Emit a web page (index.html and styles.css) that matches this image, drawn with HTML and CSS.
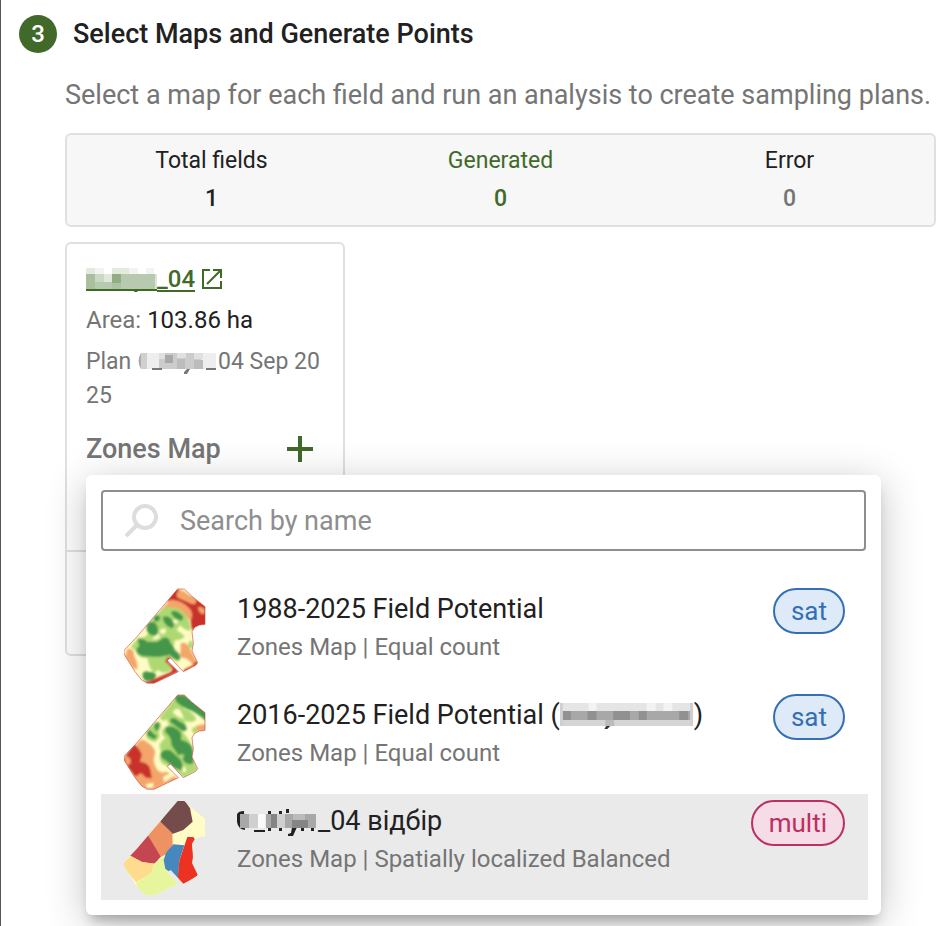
FILE: index.html
```html
<!DOCTYPE html>
<html lang="en">
<head>
<meta charset="utf-8">
<title>Select Maps and Generate Points</title>
<link rel="stylesheet" href="styles.css">
</head>
<body>
<main class="step">
  <header class="step-head">
    <span class="step-number">3</span>
    <h1 class="step-title">Select Maps and Generate Points</h1>
  </header>
  <div class="step-body">
    <p class="intro">Select a map for each field and run an analysis to create sampling plans.</p>
    <dl class="summary">
      <div class="stat"><dt>Total fields</dt><dd>1</dd></div>
      <div class="stat stat-ok"><dt>Generated</dt><dd>0</dd></div>
      <div class="stat stat-error"><dt>Error</dt><dd>0</dd></div>
    </dl>
    <div class="fields">
      <article class="card">
        <div class="card-main">
          <a class="field-link" href="#field"><span class="field-name"><svg class="mosaic mosaic-link" viewBox="0 0 71 24" aria-hidden="true">
            <path fill="#e3ebdf" d="M0 0h9v6H0zM26 0h17v6H26z"/><path fill="#f1f5ef" d="M9 0h9v6H9zM43 0h9v6h-9zM60 0h8v6h-8z"/>
            <path fill="#a9bf9d" d="M0 6h9v15H0z"/><path fill="#cbd8c4" d="M9 6h9v8H9z"/><path fill="#b7c9ae" d="M9 14h17v7H9zM35 6h34v15H35z"/><path fill="#e0e8dc" d="M18 6h8v8h-8z"/><path fill="#92ad82" d="M26 6h9v9h-9z"/><path fill="#aec3a3" d="M26 15h9v6h-9z"/><path fill="#dce6d7" d="M69 6h2v15h-2z"/><path fill="#3f6b27" d="M0 21h71v2H0zM49 22h4l-2 2h-3z"/>
          </svg>_04</span><svg class="icon-open" viewBox="0 0 22 22" aria-hidden="true"><path d="M9 2H2V20H20V13M12 2H20V10M6 16L20 2"/></svg></a>
          <p class="area">Area: <strong>103.86 ha</strong></p>
          <p class="plan">Plan <svg class="mosaic mosaic-plan" viewBox="0 0 81 22" aria-hidden="true">
            <path fill="#aaa" d="M4 1Q-1 9 4 17z"/><path fill="#d0d0d0" d="M4 1h6v16H4z"/><path fill="#eee" d="M10 1h12v16H10zM64 1h15v16H64z"/><path fill="#ccc" d="M22 1h42v16H22z"/><path fill="#e0e0e0" d="M22 1h6v6h-6zM40 1h9v5h-9zM57 1h9v6h-9z"/><path fill="#a8a8a8" d="M28 3h8v8h-8z"/><path fill="#bcbcbc" d="M40 7h8v10h-8zM57 8h9v9h-9z"/><path fill="#777" d="M15 16h10v2H15zM69 16h10v2H69zM50 17h3l-3 5h-3v-2z"/>
          </svg>04 Sep 20<br>25</p>
          <div class="zones">
            <h2>Zones Map</h2>
            <button class="add" type="button" aria-label="Add map"><svg viewBox="0 0 26 26" aria-hidden="true"><path d="M13 0V26M0 13H26"/></svg></button>
          </div>
        </div>
        <div class="card-foot"></div>
      </article>
      <section class="picker">
        <label class="search">
          <svg viewBox="0 0 34 34" aria-hidden="true"><circle cx="21" cy="13" r="11"/><path d="M13 21L2 32"/></svg>
          <input type="search" placeholder="Search by name" aria-label="Search by name">
        </label>
        <ul class="maps">
          <li><button class="map" type="button">
            <svg class="thumb" viewBox="42 39 246 288" aria-hidden="true">
              <defs>
                <path id="shape" d="M203 42H223L245 63L285 95V148L268 150L254 157L246 170L250 205L246 228L263 263L257 271L220 290L182 249L171 256L205 290L132 325H112L95 315L75 290L42 237V226L80 186Z"/>
                <clipPath id="field"><use href="#shape"/></clipPath>
                <filter id="soft"><feGaussianBlur stdDeviation="3"/></filter>
              </defs>
              <g clip-path="url(#field)"><path fill="#fffbc4" d="M40 40h250v290H40z"/><g filter="url(#soft)">
                <path fill="#c9302a" d="M196 38L290 90V155L245 165L240 125L170 75Z"/>
                <path fill="#f4a66b" d="M205 48Q220 42 235 60L257 76Q262 88 248 88L205 69Q195 60 205 48M264 97Q275 92 288 108L280 118Q266 115 264 97M182 74Q215 75 238 100Q252 115 242 138Q215 110 175 100L160 108L148 122L152 105ZM52 222Q72 218 72 242Q84 262 82 285L64 275L45 245ZM212 205Q228 198 238 218L262 262L246 268Q238 250 218 248Q205 245 212 230Z"/>
                <path fill="#aed972" d="M148 110Q165 90 185 98Q208 96 224 118Q245 140 240 168Q222 165 210 150L200 165L224 183Q220 195 195 196L190 215L210 240L205 262L180 246L170 262L185 285Q160 300 145 285L132 294L120 278L112 250Q80 248 78 228L62 215L85 188Q105 190 114 176L110 150ZM238 198Q250 195 250 215Q238 228 234 212Z"/>
                <path fill="#fffbc4" d="M124 200Q142 180 132 196L150 188L144 170L132 184ZM148 168Q158 156 168 164Q170 174 156 178ZM188 135L202 134L204 146L190 144Z"/>
                <path fill="#45964b" d="M132 124Q148 116 151 130Q147 144 132 138ZM110 150Q122 132 138 146Q150 166 140 181Q118 186 110 165ZM158 126Q176 118 190 140Q196 158 184 160Q160 150 158 126M183 110Q200 102 219 124Q222 142 204 134Q185 125 183 110M83 192Q100 188 112 200L142 200L160 188Q180 186 180 202Q192 214 194 226Q214 240 211 252Q200 262 180 240L145 246Q116 244 98 244Q75 236 80 220Q92 215 85 204ZM98 295Q108 285 118 292Q132 288 139 302L130 316L108 318Q96 310 98 295"/>
                <path fill="#c9302a" d="M165 258L174 245L184 250L175 262L208 288L132 328H85L120 318L180 292L188 284ZM222 284L246 272L258 258L267 266L222 294Z"/>
              </g></g><use href="#shape" class="edge"/>
            </svg>
            <span class="map-text"><span class="map-name">1988-2025 Field Potential</span><span class="map-kind">Zones Map | Equal count</span></span>
            <span class="tag tag-sat">sat</span>
          </button></li>
          <li><button class="map" type="button">
            <svg class="thumb" viewBox="42 39 246 288" aria-hidden="true">
              <g clip-path="url(#field)"><path fill="#fffbc4" d="M40 40h250v290H40z"/><g filter="url(#soft)" transform="translate(0 12)">
                <path fill="#f4a66b" d="M80 175Q92 160 104 166L120 178Q142 196 132 216Q128 232 140 252Q152 268 168 260Q190 268 205 282L130 317H95L70 280L85 268ZM178 56Q194 50 200 68L188 72ZM258 122L290 116V140H255Z"/>
                <path fill="#c9302a" d="M166 78Q174 64 180 74L198 86L190 96L160 90ZM72 176L84 188L96 208L90 230Q114 232 120 250L126 280L108 278L93 264L76 276L38 225Z"/>
                <path fill="#f4a66b" d="M42 216Q64 210 62 235L50 242Z"/>
                <path fill="#aed972" d="M198 35L224 72Q240 74 256 96Q262 110 244 110Q224 112 217 100Q230 114 228 132L218 140L240 170L252 230L264 254L222 278L192 252L158 236Q142 220 154 206L148 180Q158 162 168 160Q152 150 157 134L178 118Q160 98 180 96L160 108L148 98ZM114 132Q128 116 148 110Q160 124 146 140Q154 158 136 170Q116 168 108 155ZM248 128Q258 122 264 135L255 146L246 140Z"/>
                <path fill="#fffbc4" d="M188 82Q202 60 214 82L222 102L202 94ZM220 186Q236 186 234 198L222 200ZM217 242Q230 246 228 260L218 262ZM190 126L202 138L190 138Z"/>
                <path fill="#45964b" d="M196 30H224L290 80V110Q258 80 232 72Q205 60 196 46ZM181 102Q194 94 206 108Q228 116 231 132Q226 142 214 136L180 110ZM132 120Q140 106 149 116Q148 135 136 138ZM112 140Q120 130 128 144L140 152Q138 166 126 160L110 150ZM166 128Q190 116 212 142Q216 158 212 164Q238 170 245 184Q252 200 250 235Q236 242 222 230L218 218L224 212Q214 202 206 212L184 180Q186 158 166 142ZM152 204Q166 188 184 198L212 224Q222 242 214 256L192 248L166 226Q150 220 152 204"/>
                <path fill="#fffbc4" d="M160 275L188 262L196 270L162 292ZM108 298L130 294V306L112 310Z"/>
              </g></g><use href="#shape" class="edge"/>
            </svg>
            <span class="map-text"><span class="map-name">2016-2025 Field Potential (<svg class="mosaic mosaic-map" viewBox="0 0 136 28" preserveAspectRatio="none" aria-hidden="true">
              <path fill="#cfcfcf" d="M0 1h3v23H0zM132 1h3v23h-3z"/><path fill="#e5e5e5" d="M3 1h129v8H3z"/><path fill="#f3f3f3" d="M29 1h8v8h-8zM88 1h9v8h-9zM105 1h9v8h-9z"/><path fill="#a8a8a8" d="M3 9h129v9H3z"/><path fill="#919191" d="M3 9h8v9H3zM28 9h9v9h-9zM54 9h17v9H54zM80 9h8v9h-8zM121 9h9v9h-9z"/><path fill="#d5d5d5" d="M3 18h129v6H3z"/><path fill="#bbb" d="M46 18h9v6h-9z"/><path fill="#333" d="M47 24h4l-3 3h-3z"/>
            </svg>)</span><span class="map-kind">Zones Map | Equal count</span></span>
            <span class="tag tag-sat">sat</span>
          </button></li>
          <li><button class="map map-active" type="button">
            <svg class="thumb" viewBox="42 30 246 288" aria-hidden="true">
              <g transform="translate(0 -9)" clip-path="url(#field)"><g transform="translate(0 9)">
                <path fill="#fffdc5" d="M40 30h250v290H40z"/>
                <path fill="#734c4b" d="M200 28H222L240 55L248 95L220 120L187 132L150 95Z"/>
                <path fill="#ee9163" d="M150 94L187 130L188 165L170 192L148 203L113 134Z"/>
                <path fill="#c34650" d="M113 134L152 200L134 221L96 216L60 197Z"/>
                <path fill="#fddc8e" d="M62 197L96 216L132 221L124 250L78 277L35 225Z"/>
                <path fill="#e7f69d" d="M78 279L124 250L132 221L160 200L170 235L210 280L132 325H95Z"/>
                <path fill="#4688bd" d="M190 163L223 166L208 212L204 265L166 236L161 210L168 188Z"/>
                <path fill="#eb3223" d="M232 141H250L256 150L247 162L249 205L265 255L220 284L203 264L208 212Z"/>
              </g></g>
            </svg>
            <span class="map-text"><span class="map-name"><svg class="mosaic mosaic-active" viewBox="0 0 81 28" aria-hidden="true">
              <path fill="#222" d="M7 3Q-3 3 0 14Q1 21 8 22zM17 22h11v2H17zM31 3h3v3h-3zM42 3h3v3h-3zM49 1h3v4h-3zM31 19h3v4h-3zM42 19h3v4h-3zM55 19h5l-4 9h-5v-2l3-1zM64 19h3v4h-3zM74 19h3v4h-3z"/><path fill="#a8a8a8" d="M3 6h9v14H3zM29 6h12v14H29zM47 6h32v14H47z"/><path fill="#cfcfcf" d="M12 6h9v14h-9zM40 6h8v14h-8z"/><path fill="#fafafa" d="M21 6h7v14h-7z"/><path fill="#858585" d="M34 6h6v14h-6zM55 12h16v8H55z"/><path fill="#bbb" d="M56 6h12v6H56z"/>
            </svg>_04 відбір</span><span class="map-kind">Zones Map | Spatially localized Balanced</span></span>
            <span class="tag tag-multi">multi</span>
          </button></li>
        </ul>
      </section>
    </div>
  </div>
</main>
</body>
</html>
```
FILE: styles.css
```css
* { box-sizing: border-box; }
body {
  margin: 0;
  background: #fff;
  color: #212121;
  font-family: Roboto, "Liberation Sans", sans-serif;
  font-size: 24px;
}
h1, h2, p, dl, dd, ul { margin: 0; padding: 0; }
ul { list-style: none; }
button { font: inherit; color: inherit; border: 0; background: none; padding: 0; cursor: pointer; }

.step { min-height: 100vh; border-left: 1px solid #555; padding: 15px 10px 0 18px; }
.step-head { display: flex; align-items: center; gap: 16px; }
.step-number {
  display: grid; place-items: center;
  width: 38px; height: 38px; border-radius: 50%;
  background: #40692a; color: #fff; font-weight: 500;
}
.step-title { font-size: 27px; line-height: 38px; font-weight: 500; }
.step-body { padding-left: 46px; }
.intro { margin-top: 24px; font-size: 27px; line-height: 36px; color: #757575; white-space: nowrap; }

.summary {
  display: grid; grid-template-columns: repeat(3, 1fr);
  margin-top: 20px; padding: 7px 0;
  border: 2px solid #e0e0e0; border-radius: 6px; background: #f7f7f7;
  text-align: center; font-size: 23px; line-height: 38px;
}
.stat dd { font-weight: 500; }
.stat-ok { color: #40692a; }
.stat-error dd { color: #757575; }

.fields { position: relative; margin-top: 15px; }
.card { width: 280px; border: 2px solid #e0e0e0; border-radius: 6px; color: #757575; }
.card-main { padding: 17px 18px 0 19px; min-height: 308px; border-bottom: 2px solid #e0e0e0; }
.card-foot { height: 102px; }
.field-link { display: flex; align-items: center; gap: 6px; color: #3f6b27; font-weight: 500; line-height: 36px; text-decoration: none; }
.field-name { text-decoration: underline; text-decoration-thickness: 2px; text-underline-offset: 3px; text-decoration-skip-ink: none; }
.icon-open { width: 22px; height: 22px; fill: none; stroke: currentColor; stroke-width: 2; }
.area { margin-top: 6px; line-height: 34px; }
.area strong { color: #212121; font-weight: 400; }
.plan { margin-top: 8px; font-size: 23px; line-height: 34px; white-space: nowrap; }
.zones { display: flex; align-items: center; justify-content: space-between; margin-top: 18px; padding-right: 12px; }
.zones h2 { font-size: 27px; line-height: 36px; font-weight: 500; }
.add { display: flex; color: #40692a; }
.add svg { width: 26px; height: 26px; stroke: currentColor; stroke-width: 4; }

.mosaic { display: inline-block; }
.mosaic-link { width: 71px; height: 24px; vertical-align: -5px; }
.mosaic-plan { width: 81px; height: 22px; vertical-align: -5px; }
.mosaic-map { width: 134px; height: 28px; vertical-align: -6px; }
.mosaic-active { width: 81px; height: 28px; vertical-align: -6px; }

.picker {
  position: absolute; top: 233px; left: 21px; right: 55px;
  padding: 15px 13px 15px 15px;
  border-radius: 6px; background: #fff;
  box-shadow: 0 10px 12px -5px rgba(0,0,0,.25), 0 8px 40px rgba(0,0,0,.24);
}
.search {
  display: flex; align-items: center; gap: 22px;
  height: 61px; margin-right: 2px; padding: 0 21px;
  border: 2px solid #8e8e8e; border-radius: 4px;
}
.search svg { width: 34px; height: 34px; fill: none; stroke: #ddd; stroke-width: 4; }
.search input {
  flex: 1; min-width: 0; border: 0; outline: 0; padding: 0; background: none;
  font: inherit; font-size: 27px; line-height: 36px; color: #212121;
}
.search input::placeholder { color: #8e8e8e; opacity: 1; }
.maps { margin-top: 31px; }
.map { display: flex; align-items: flex-start; width: 100%; height: 106px; padding: 6px 23px 0; text-align: left; }
.map-active { background: #eaeaea; }
.thumb { flex: none; width: 82px; height: 96px; }
.edge { fill: none; stroke: #c9302a; stroke-opacity: .55; stroke-width: 3; }
.map-text { display: flex; flex-direction: column; flex: 1; margin-left: 31px; }
.map-name { font-size: 27px; line-height: 42px; white-space: nowrap; }
.map-kind { line-height: 34px; color: #757575; }
.tag { padding: 0 16px; border: 2px solid; border-radius: 23px; font-size: 26px; line-height: 42px; }
.tag-sat { color: #356fb3; background: #deeaf7; }
.tag-multi { color: #bd2f60; background: #f6dce6; }
```
